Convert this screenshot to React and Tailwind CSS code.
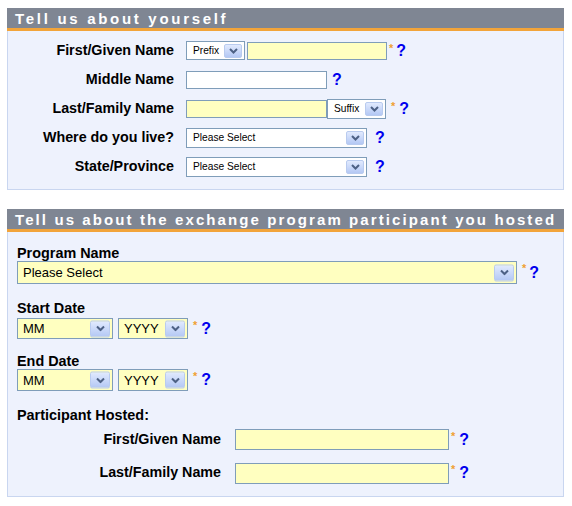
import React from 'react'

const font = { fontFamily: '"Liberation Sans", Arial, sans-serif' }

// little blue dropdown button with chevron
function DropButton({ big }) {
  return (
    <span
      className={`absolute top-1/2 -translate-y-1/2 right-[2px] flex items-center justify-center rounded-[2px] border border-[#b9cbef] bg-gradient-to-b from-[#e1eafe] to-[#b4c8f4] ${
        big ? 'w-[20px] h-[17px]' : 'w-[18px] h-[14px]'
      }`}
    >
      <svg width="9" height="6" viewBox="0 0 9 6" className="block">
        <path d="M1 1l3.5 3.5L8 1" fill="none" stroke="#4d6185" strokeWidth="2" />
      </svg>
    </span>
  )
}

function Select({ value, className, textClass = 'text-[10.2px] pl-[6px] pt-[1px]', big, yellow }) {
  return (
    <div
      className={`relative flex items-center border border-[#7f9db9] text-black ${
        yellow ? 'bg-[#ffffc0]' : 'bg-white'
      } ${textClass} ${className}`}
    >
      <span className="leading-none">{value}</span>
      <DropButton big={big} />
    </div>
  )
}

function Input({ className, yellow }) {
  return (
    <div
      className={`border border-[#7f9db9] ${yellow ? 'bg-[#ffffc0]' : 'bg-white'} ${className}`}
    />
  )
}

function Req({ className = '' }) {
  return (
    <span className={`text-[#f0a030] text-[11px] font-bold leading-none self-start mt-[2px] ${className}`}>*</span>
  )
}

function Help({ className = '' }) {
  return <span className={`text-[#0000ee] text-[16px] font-bold leading-none ${className}`}>?</span>
}

function Header({ children, tracking }) {
  return (
    <div className="bg-[#7f8693] h-[20px] flex items-center pl-[8px] border-b-[3px] border-[#f2a43a] box-content">
      <span className={`text-white text-[15px] font-bold leading-none ${tracking}`}>{children}</span>
    </div>
  )
}

function Row({ label, children }) {
  return (
    <div className="flex items-center h-[29px]">
      <div className="w-[167px] text-right text-[14.3px] font-bold text-black pr-[1px]">{label}</div>
      <div className="ml-[11px] flex items-center">{children}</div>
    </div>
  )
}

const big = 'text-[13px] pl-[5px]'

export default function App() {
  return (
    <div className="w-[572px] h-[506px] bg-white pt-[8px] pl-[7px]" style={font}>
      <div className="w-[557px]">
        <Header tracking="tracking-[2.7px]">Tell us about yourself</Header>
        <div className="bg-[#eef2fd] border border-t-0 border-[#c9d6f0] pt-[5px] pb-[8px]">
          <Row label="First/Given Name">
            <Select value="Prefix" className="w-[59px] h-[19px]" />
            <Input yellow className="w-[140px] h-[18px] ml-[2px]" />
            <Req className="ml-[2px]" />
            <Help className="ml-[3px]" />
          </Row>
          <Row label="Middle Name">
            <Input className="w-[141px] h-[18px]" />
            <Help className="ml-[5px]" />
          </Row>
          <Row label="Last/Family Name">
            <Input yellow className="w-[141px] h-[18px]" />
            <Select value="Suffix" className="w-[59px] h-[20px]" />
            <Req className="ml-[5px]" />
            <Help className="ml-[4px]" />
          </Row>
          <Row label="Where do you live?">
            <Select value="Please Select" className="w-[181px] h-[20px]" />
            <Help className="ml-[8px]" />
          </Row>
          <Row label="State/Province">
            <Select value="Please Select" className="w-[181px] h-[20px]" />
            <Help className="ml-[8px]" />
          </Row>
        </div>

        <div className="h-[19px]" />

        <Header tracking="tracking-[2.1px]">Tell us about the exchange program participant you hosted</Header>
        <div className="bg-[#eef2fd] border border-t-0 border-[#c9d6f0] pl-[9px] pt-[13px] pb-[12px]">
          <div className="text-[14.4px] font-bold text-black leading-[16px]">Program Name</div>
          <div className="flex items-center">
            <Select value="Please Select" yellow big textClass={big} className="w-[500px] h-[23px]" />
            <Req className="ml-[5px]" />
            <Help className="ml-[3px]" />
          </div>

          <div className="text-[14.4px] font-bold text-black leading-[16px] mt-[16px]">Start Date</div>
          <div className="flex items-center mt-[2px]">
            <Select value="MM" yellow big textClass={big} className="w-[96px] h-[21px]" />
            <Select value="YYYY" yellow big textClass={big} className="w-[70px] h-[21px] ml-[5px]" />
            <Req className="ml-[5px]" />
            <Help className="ml-[4px]" />
          </div>

          <div className="text-[14.4px] font-bold text-black leading-[16px] mt-[14px]">End Date</div>
          <div className="flex items-center">
            <Select value="MM" yellow big textClass={big} className="w-[96px] h-[22px]" />
            <Select value="YYYY" yellow big textClass={big} className="w-[70px] h-[22px] ml-[5px]" />
            <Req className="ml-[5px]" />
            <Help className="ml-[4px]" />
          </div>

          <div className="text-[14.4px] font-bold text-black leading-[16px] mt-[16px]">Participant Hosted:</div>
          <div className="flex items-center mt-[6px]">
            <div className="w-[204px] text-right text-[14.3px] font-bold text-black">First/Given Name</div>
            <Input yellow className="w-[214px] h-[21px] ml-[14px]" />
            <Req className="ml-[2px]" />
            <Help className="ml-[4px]" />
          </div>
          <div className="flex items-center mt-[12px]">
            <div className="w-[204px] text-right text-[14.3px] font-bold text-black">Last/Family Name</div>
            <Input yellow className="w-[214px] h-[21px] ml-[14px]" />
            <Req className="ml-[2px]" />
            <Help className="ml-[4px]" />
          </div>
        </div>
      </div>
    </div>
  )
}
